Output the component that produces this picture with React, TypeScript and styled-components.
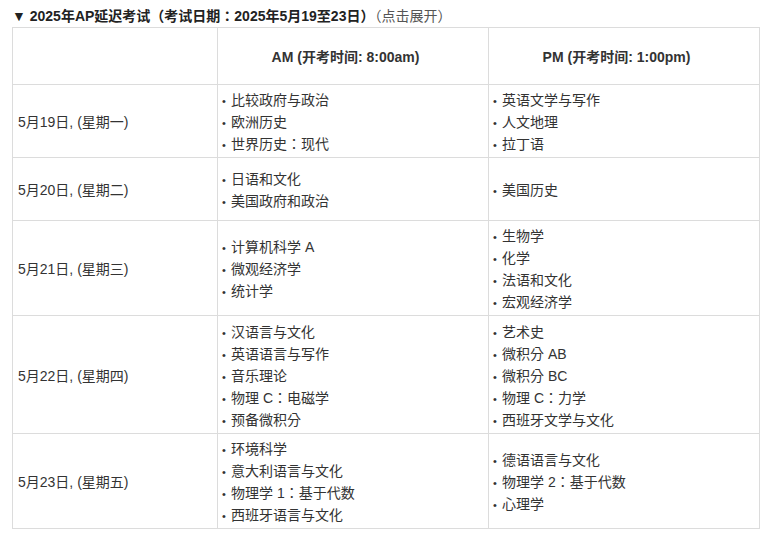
import React from "react";
import styled, { createGlobalStyle } from "styled-components";

const Global = createGlobalStyle`
  html, body { margin: 0; padding: 0; background: #fff; }
  body { font-family: "Liberation Sans", Arial, "Noto Sans CJK KR", sans-serif; color: #333; }
`;

const Page = styled.div`
  padding: 6px 10px 0 12px;
`;

const Summary = styled.div`
  font-size: 14px;
  line-height: 20px;
  height: 20px;
  font-weight: bold;
  color: #222;
  margin-bottom: 1px;
  white-space: nowrap;
`;

const Hint = styled.span`
  font-weight: normal;
  color: #555;
`;

const Table = styled.table`
  border-collapse: collapse;
  width: 748px;
  table-layout: fixed;
  font-size: 14px;
`;

const Th = styled.th`
  border: 1px solid #dcdcdc;
  font-weight: bold;
  text-align: center;
  padding: 0 15px 0 0;
  color: #333;
`;

const Row = styled.tr<{ $h: number }>`
  height: ${(p) => p.$h}px;
`;

const DateCell = styled.td`
  border: 1px solid #dcdcdc;
  padding: 0 5px;
  vertical-align: middle;
  color: #333;
`;

const ListCell = styled.td`
  border: 1px solid #dcdcdc;
  padding: 2px 4px 0;
  vertical-align: middle;
`;

const List = styled.ul`
  list-style: none;
  margin: 0;
  padding: 0;
`;

const Item = styled.li`
  line-height: 22px;
  height: 22px;
  color: #333;
  white-space: nowrap;
  &::before {
    content: "•";
    display: inline-block;
    width: 9px;
    font-size: 11px;
    line-height: 10px;
  }
`;

const rows: { date: string; am: string[]; pm: string[]; h: number }[] = [
  { date: "5月19日, (星期一)", am: ["比较政府与政治", "欧洲历史", "世界历史：现代"], pm: ["英语文学与写作", "人文地理", "拉丁语"], h: 73 },
  { date: "5月20日, (星期二)", am: ["日语和文化", "美国政府和政治"], pm: ["美国历史"], h: 63 },
  { date: "5月21日, (星期三)", am: ["计算机科学 A", "微观经济学", "统计学"], pm: ["生物学", "化学", "法语和文化", "宏观经济学"], h: 95 },
  { date: "5月22日, (星期四)", am: ["汉语言与文化", "英语语言与写作", "音乐理论", "物理 C：电磁学", "预备微积分"], pm: ["艺术史", "微积分 AB", "微积分 BC", "物理 C：力学", "西班牙文学与文化"], h: 118 },
  { date: "5月23日, (星期五)", am: ["环境科学", "意大利语言与文化", "物理学 1：基于代数", "西班牙语言与文化"], pm: ["德语语言与文化", "物理学 2：基于代数", "心理学"], h: 95 },
];

export default function App() {
  return (
    <Page>
      <Global />
      <Summary>
        ▼ 2025年AP延迟考试（考试日期：2025年5月19至23日）<Hint>（点击展开）</Hint>
      </Summary>
      <Table>
        <colgroup>
          <col style={{ width: 205 }} />
          <col style={{ width: 271 }} />
          <col style={{ width: 271 }} />
        </colgroup>
        <thead>
          <Row $h={57}>
            <Th></Th>
            <Th>AM (开考时间: 8:00am)</Th>
            <Th>PM (开考时间: 1:00pm)</Th>
          </Row>
        </thead>
        <tbody>
          {rows.map((r) => (
            <Row key={r.date} $h={r.h}>
              <DateCell>{r.date}</DateCell>
              <ListCell>
                <List>
                  {r.am.map((s) => (
                    <Item key={s}>{s}</Item>
                  ))}
                </List>
              </ListCell>
              <ListCell>
                <List>
                  {r.pm.map((s) => (
                    <Item key={s}>{s}</Item>
                  ))}
                </List>
              </ListCell>
            </Row>
          ))}
        </tbody>
      </Table>
    </Page>
  );
}
